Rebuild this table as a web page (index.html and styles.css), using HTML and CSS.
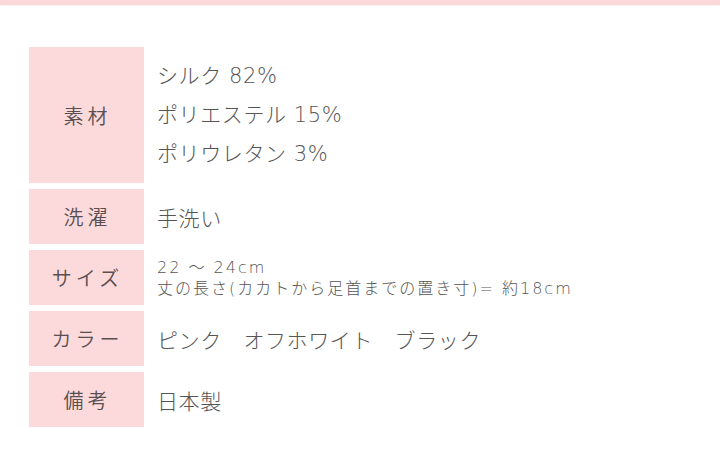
FILE: index.html
```html
<!DOCTYPE html>
<html lang="ja">
<head>
<meta charset="utf-8">
<link rel="stylesheet" href="styles.css">
</head>
<body>
<div class="topbar"></div>
<div class="spec">
  <div class="row row-tall">
    <div class="label">素材</div>
    <div class="value value-list">
      <div>シルク 82%</div>
      <div>ポリエステル 15%</div>
      <div>ポリウレタン 3%</div>
    </div>
  </div>
  <div class="row">
    <div class="label">洗濯</div>
    <div class="value">手洗い</div>
  </div>
  <div class="row">
    <div class="label">サイズ</div>
    <div class="value value-small">
      <div>22 ～ 24cm</div>
      <div>丈の長さ(カカトから足首までの置き寸)= 約18cm</div>
    </div>
  </div>
  <div class="row">
    <div class="label">カラー</div>
    <div class="value">ピンク　オフホワイト　ブラック</div>
  </div>
  <div class="row">
    <div class="label">備考</div>
    <div class="value">日本製</div>
  </div>
</div>
</body>
</html>
```

FILE: styles.css
```css
html, body {
  margin: 0;
  padding: 0;
  background: #ffffff;
}
body {
  font-family: "Noto Sans CJK JP", "Noto Sans", sans-serif;
  color: #555555;
  width: 720px;
  height: 472px;
  overflow: hidden;
}
.topbar {
  height: 5px;
  background: #fcd8da;
  box-shadow: 0 1px 2px #fdeeee;
}
.spec {
  margin: 42px 0 0 29px;
  display: flex;
  flex-direction: column;
  gap: 6px;
}
.row {
  display: grid;
  grid-template-columns: 115px 1fr;
  height: 55px;
}
.row-tall {
  height: 136px;
}
.label {
  background: #fcdadc;
  display: flex;
  align-items: center;
  justify-content: center;
  font-size: 20px;
  letter-spacing: 4px;
  padding-left: 2px;
  color: #5a4f50;
  font-weight: 350;
}
.value {
  display: flex;
  flex-direction: column;
  justify-content: center;
  padding-left: 13px;
  font-family: "DejaVu Sans", "Noto Sans CJK JP", sans-serif;
  font-size: 21px;
  font-weight: 300;
  color: #555555;
  letter-spacing: 0.6px;
}
.value-list {
  line-height: 39px;
}
.value-small {
  font-size: 16px;
  line-height: 21px;
  letter-spacing: 2px;
}
```
